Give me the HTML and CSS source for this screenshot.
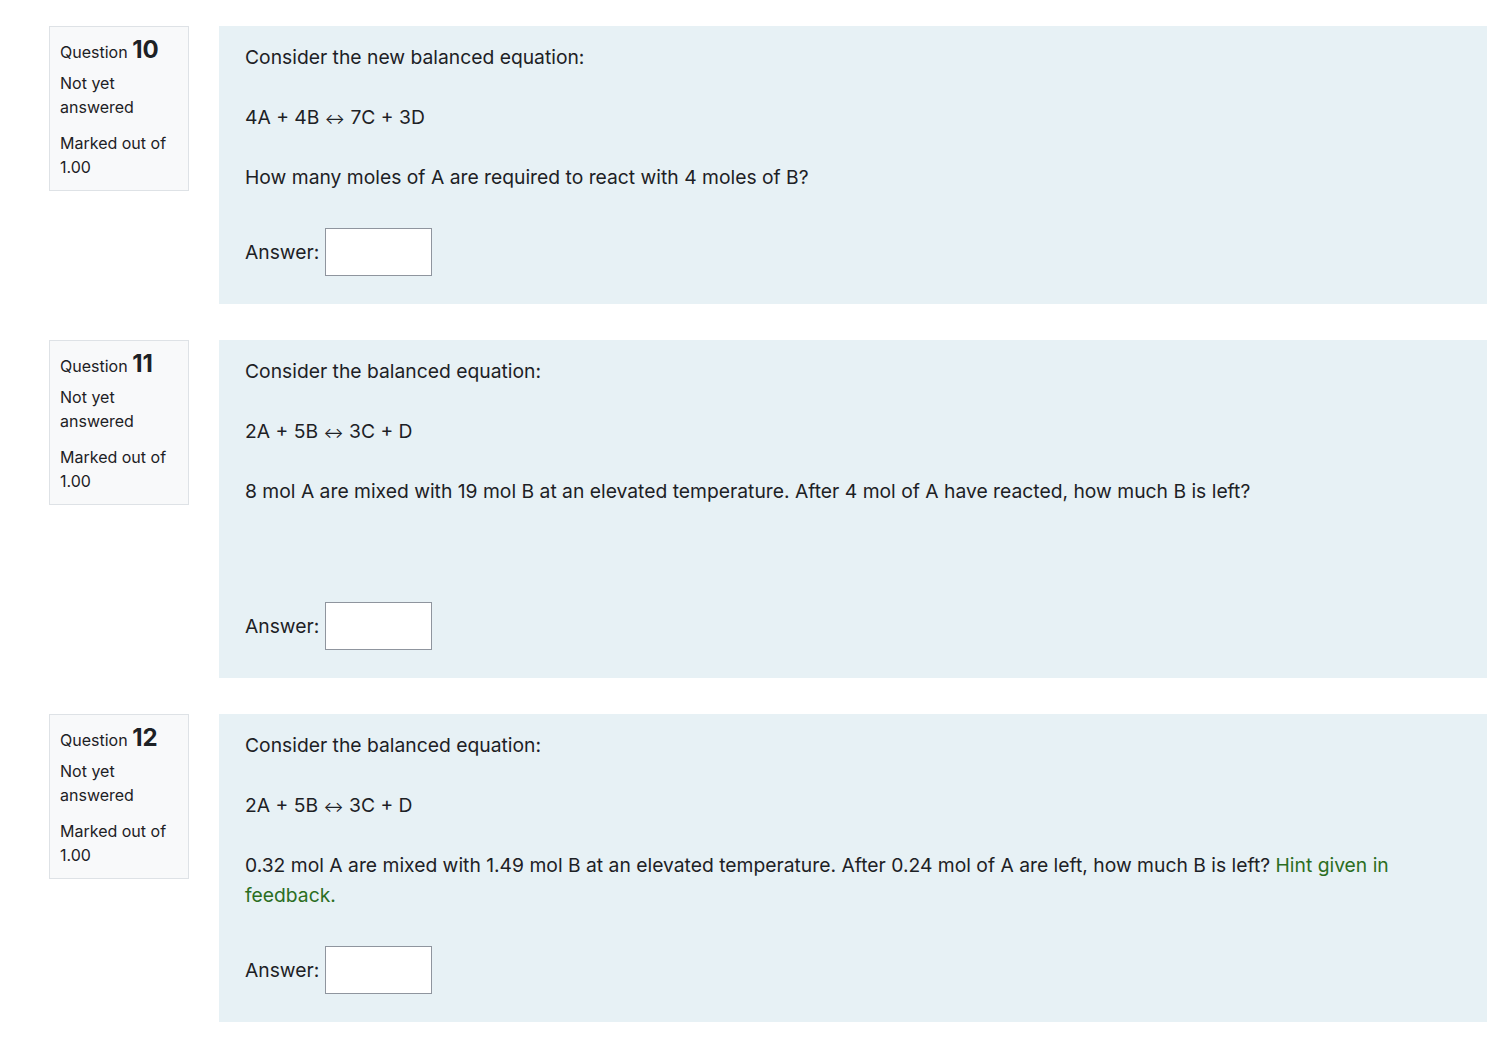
FILE: index.html
```html
<!DOCTYPE html>
<html lang="en">
<head>
  <meta charset="UTF-8">
  <title>Quiz</title>
  <link rel="stylesheet" href="styles.css">
</head>
<body>

<div class="quiz">

  <!-- Question 10 -->
  <div class="que">
    <div class="info">
      <h3 class="no">Question <span class="qno">10</span></h3>
      <div class="state">Not yet answered</div>
      <div class="grade">Marked out of 1.00</div>
    </div>
    <div class="formulation">
      <p>Consider the new balanced equation:</p>
      <p>4A + 4B <span class="arrow">↔</span> 7C + 3D</p>
      <p>How many moles of A are required to react with 4 moles of B?</p>
      <div class="ablock">
        <label for="q10">Answer:</label>
        <input type="text" id="q10">
      </div>
    </div>
  </div>

  <!-- Question 11 -->
  <div class="que">
    <div class="info">
      <h3 class="no">Question <span class="qno">11</span></h3>
      <div class="state">Not yet answered</div>
      <div class="grade">Marked out of 1.00</div>
    </div>
    <div class="formulation">
      <p>Consider the balanced equation:</p>
      <p>2A + 5B <span class="arrow">↔</span> 3C + D</p>
      <p>8 mol A are mixed with 19 mol B at an elevated temperature. After 4 mol of A have reacted, how much B is left?</p>
      <p>&nbsp;</p>
      <div class="ablock">
        <label for="q11">Answer:</label>
        <input type="text" id="q11">
      </div>
    </div>
  </div>

  <!-- Question 12 -->
  <div class="que">
    <div class="info">
      <h3 class="no">Question <span class="qno">12</span></h3>
      <div class="state">Not yet answered</div>
      <div class="grade">Marked out of 1.00</div>
    </div>
    <div class="formulation">
      <p>Consider the balanced equation:</p>
      <p>2A + 5B <span class="arrow">↔</span> 3C + D</p>
      <p>0.32 mol A are mixed with 1.49 mol B at an elevated temperature. After 0.24 mol of A are left, how much B is left? <span class="hint">Hint given in feedback.</span></p>
      <div class="ablock">
        <label for="q12">Answer:</label>
        <input type="text" id="q12">
      </div>
    </div>
  </div>

</div>

</body>
</html>
```

FILE: styles.css
```css
/* Genel */
* {
  margin: 0;
  padding: 0;
  box-sizing: border-box;
}

body {
  font-family: Inter, "Noto Sans", sans-serif;
  color: #1d2125;
  background: #fff;
}

.quiz {
  padding: 26px 10px 0 49px;
  display: flex;
  flex-direction: column;
  gap: 36px;
}

/* Soru */
.que {
  display: flex;
  align-items: flex-start;
  gap: 30px;
}

.info {
  width: 140px;
  flex-shrink: 0;
  background: #f8f9fa;
  border: 1px solid #dee2e6;
  padding: 9px 10px 11px;
  font-size: 16px;
  line-height: 24px;
}

.info .no {
  font-size: 16px;
  font-weight: normal;
  line-height: 28px;
  margin-bottom: 5px;
}

.info .qno {
  font-size: 24px;
  font-weight: bold;
}

.info .state {
  margin-bottom: 12px;
}

/* Soru metni */
.formulation {
  flex: 1;
  background: #e7f1f5;
  padding: 16px 26px 28px;
  font-size: 19.3px;
  line-height: 30px;
}

.formulation p {
  margin-bottom: 30px;
}

.arrow {
  font-size: 15px;
  line-height: 1;
}

.hint {
  color: #2b6e1f;
}

.ablock {
  display: flex;
  align-items: center;
  gap: 6px;
  margin-top: 36px;
}

.ablock input {
  width: 107px;
  height: 48px;
  border: 1px solid #8f959e;
  background: #fff;
  font: inherit;
}
```
